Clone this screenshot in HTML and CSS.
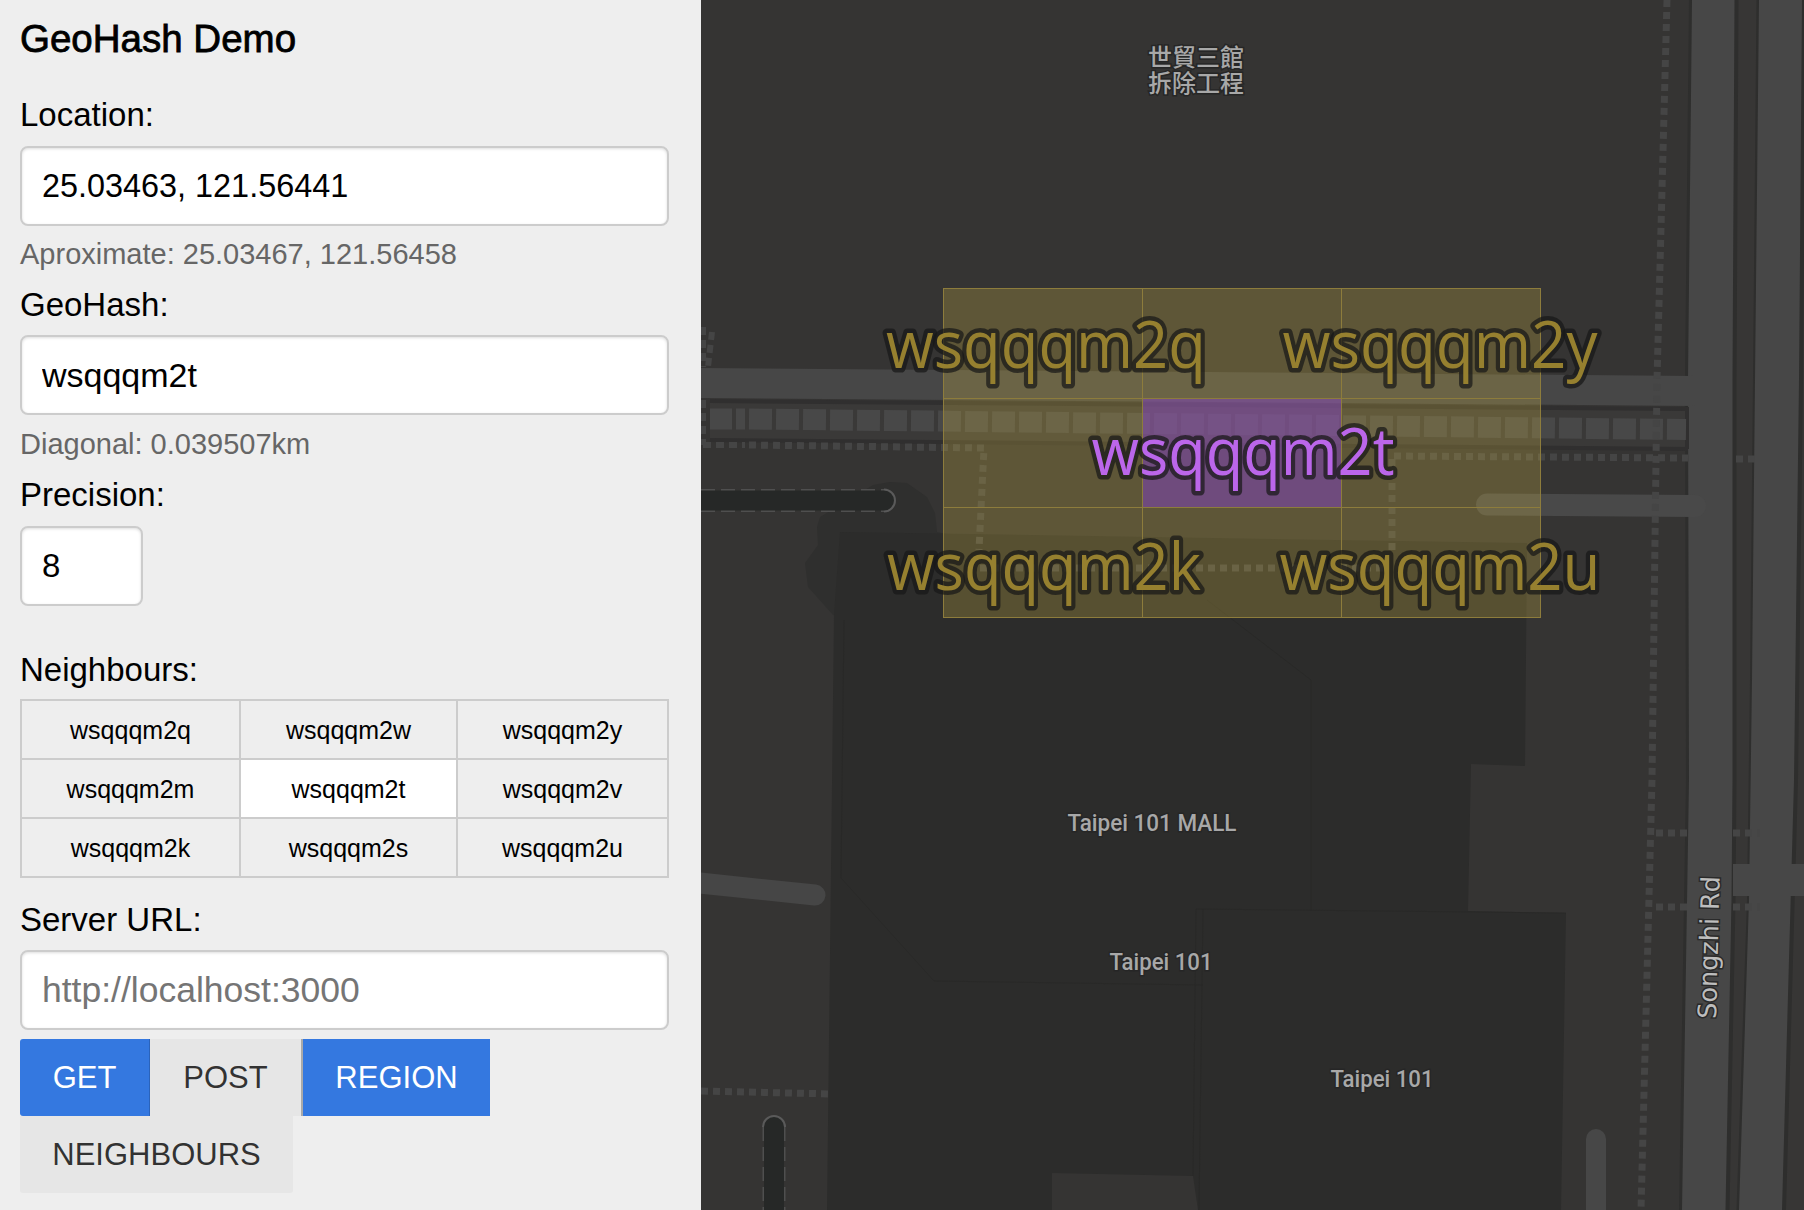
FILE: index.html
```html
<!DOCTYPE html>
<html lang="en">
<head>
<meta charset="utf-8">
<title>GeoHash Demo</title>
<link rel="stylesheet" href="styles.css">
</head>
<body>
<div class="app">
  <aside class="panel">
    <h1 class="title">GeoHash Demo</h1>
    <form class="form">
      <label class="label">Location:</label>
      <input class="input input-coords" type="text" value="25.03463, 121.56441">
      <p class="hint">Aproximate: 25.03467, 121.56458</p>
      <label class="label label-tight">GeoHash:</label>
      <input class="input input-hash" type="text" value="wsqqqm2t">
      <p class="hint hint-second">Diagonal: 0.039507km</p>
      <label class="label">Precision:</label>
      <input class="input input-small" type="text" value="8">
      <label class="label label-gap">Neighbours:</label>
      <table class="grid">
        <colgroup><col class="col-a"><col class="col-b"><col class="col-c"></colgroup>
        <tr><td>wsqqqm2q</td><td>wsqqqm2w</td><td>wsqqqm2y</td></tr>
        <tr><td>wsqqqm2m</td><td class="current">wsqqqm2t</td><td>wsqqqm2v</td></tr>
        <tr><td>wsqqqm2k</td><td>wsqqqm2s</td><td>wsqqqm2u</td></tr>
      </table>
      <label class="label label-server">Server URL:</label>
      <input class="input input-url" type="text" placeholder="http://localhost:3000">
      <div class="buttons">
        <button type="button" class="btn btn-primary btn-get">GET</button>
        <button type="button" class="btn btn-post">POST</button>
        <button type="button" class="btn btn-primary btn-region">REGION</button>
        <button type="button" class="btn btn-neighbours">NEIGHBOURS</button>
      </div>
    </form>
  </aside>
  <main class="map">
    <svg class="map-svg" viewBox="701 0 1103 1210" width="1103" height="1210" xmlns="http://www.w3.org/2000/svg">
      <rect class="ground" x="701" y="0" width="1103" height="1210"/>

      <!-- buildings -->
      <path class="bld-soft" d="M873 485 L890 482 L907 483 L927 497 L935 513 L937 532 L947 534 L947 625 L845 618 L833 615 L808 587 L805 563 L818 545 L817 527 L820 517 Z"/>
      <path class="bld" d="M840 532 L1527 543 L1525 766 L1471 764 L1468 911 L1566 913 L1561 1210 L827 1210 L834 615 Z"/>
      <path class="ground-patch" d="M1052 1173 L1193 1176 L1198 1210 L1052 1210 Z"/>
      <path class="bld-line" d="M844 620 L841 878 L934 981 L1203 985 M1207 600 L1311 680 L1311 911 M1196 909 L1566 913 M1196 909 L1193 1176 M1203 909 L1199 1210"/>

      <!-- right roads -->
      <path class="median" d="M1734 0 L1804 0 L1804 1210 L1725 1210 Z"/>
      <path class="road-edge" d="M1691 0 L1687 380 L1688 780 L1681 1210"/>
      <path class="road" d="M1692 0 L1736 0 L1734 380 L1734 780 L1727 1210 L1682 1210 L1689 780 L1688 380 Z"/>
      <path class="road-edge" d="M1736.5 0 L1734.5 380 L1734.5 780 L1733.5 900 L1727.5 1210 M1758.5 0 L1755 380 L1752 680 L1749 900 L1738.5 1210"/>
      <path class="road" d="M1759 0 L1803 0 L1800 380 L1795 780 L1783 1210 L1739 1210 L1749 900 L1752 680 L1755 380 Z"/>
      <path class="road-edge" d="M1804 0 L1801 380 L1796 780 L1784 1210"/>
      <path class="road" d="M1733 864 L1804 864 L1804 896 L1733 896 Z"/>

      <!-- upper road and crossing -->
      <path class="band" d="M710 399 L1688 407 L1688 449 L710 440 Z"/>
      <path class="band-edge" d="M710 401 L1688 409 M710 440 L1688 449 M1687 407 L1687 449"/>
      <path class="road" d="M701 368 L1695 376 L1695 406 L701 398 Z"/>
      <path class="crossing" d="M749 419 L1686 429.5"/>
      <path class="crossing-stub" d="M710 419 L732 419 M736 419 L745 419"/>

      <path class="side-road" d="M1487 504.5 L1695 506"/>
      <path class="side-road-sm" d="M690 882 L815 895"/>
      <path class="side-road-v" d="M1596 1139 L1596 1220"/>

      <!-- footpaths -->
      <path class="path" d="M749 445 L984 448 L979 550"/>
      <path class="path" d="M980 568 L1385 568"/>
      <path class="path" d="M1392 550 L1392 456 L1688 458"/>
      <path class="path" d="M1667 0 L1657 380 L1652 780 L1641 1210"/>
      <path class="path" d="M701 1091 L833 1094"/>
      <path class="path" d="M1656 833 L1688 833 M1733 833 L1760 833 M1656 907 L1688 907 M1733 907 L1760 907 M1736 459 L1758 459"/>
      <path class="path-hatch" d="M703 327 L703 367 M712 332 L708 367 M703 400 L703 445 M703 445 L745 445"/>

      <!-- tunnels -->
      <path class="tunnel-line" d="M701 500.5 L884 500.5"/>
      <path class="tunnel" d="M701 500.5 L884 500.5"/>
      <path class="tunnel-end" d="M884 489.5 A11 11 0 0 1 884 511.5"/>
      <path class="tunnel-line" d="M774 1127 L774 1220"/>
      <path class="tunnel" d="M774 1127 L774 1220"/>
      <path class="tunnel-end" d="M763 1127 A11 11 0 0 1 785 1127"/>

      <!-- place labels -->
      <text class="place place-cjk" x="1196"><tspan x="1196" y="66">世貿三館</tspan><tspan x="1196" y="92">拆除工程</tspan></text>
      <text class="place" x="1152" y="831" textLength="169" lengthAdjust="spacingAndGlyphs">Taipei 101 MALL</text>
      <text class="place" x="1161" y="970" textLength="103" lengthAdjust="spacingAndGlyphs">Taipei 101</text>
      <text class="place" x="1382" y="1087" textLength="103" lengthAdjust="spacingAndGlyphs">Taipei 101</text>
      <text class="road-name" transform="translate(1716 1019) rotate(-88.5)">Songzhi Rd</text>

      <!-- geohash cells -->
      <rect class="cell" x="943.5" y="288.5" width="597" height="329"/>
      <rect class="cell-center" x="1142.5" y="398.5" width="199" height="109"/>
      <path class="cell-line" d="M1142.5 288.5 L1142.5 617.5 M1341.5 288.5 L1341.5 617.5 M943.5 398.5 L1540.5 398.5 M943.5 507.5 L1540.5 507.5"/>
      <rect class="cell-border" x="943.5" y="288.5" width="597" height="329"/>

      <text class="hash" x="1046" y="368" textLength="320" lengthAdjust="spacingAndGlyphs">wsqqqm2q</text>
      <text class="hash" x="1440" y="368" textLength="315" lengthAdjust="spacingAndGlyphs">wsqqqm2y</text>
      <text class="hash hash-center" x="1243" y="475" textLength="303" lengthAdjust="spacingAndGlyphs">wsqqqm2t</text>
      <text class="hash" x="1044" y="590" textLength="314" lengthAdjust="spacingAndGlyphs">wsqqqm2k</text>
      <text class="hash" x="1440" y="590" textLength="321" lengthAdjust="spacingAndGlyphs">wsqqqm2u</text>
    </svg>
  </main>
</div>
</body>
</html>
```
FILE: styles.css
```css
* { box-sizing: border-box; }
html, body { margin: 0; padding: 0; height: 100%; overflow: hidden; }
body { font-family: "Liberation Sans", Arial, sans-serif; color: #000; }

.app { display: flex; width: 1804px; height: 1210px; }

.panel { width: 701px; flex: none; background: #eee; padding: 18px 32px 0 20px; }
.title { margin: 0 0 35px; font-size: 38.5px; line-height: 42px; font-weight: 400; -webkit-text-stroke: .8px #000; }

.form { display: flex; flex-direction: column; align-items: flex-start; }
.label { display: block; font-size: 33px; line-height: 40px; margin-bottom: 11px; }
.label-tight { margin-bottom: 10px; }
.label-gap { margin-top: 44px; margin-bottom: 9px; }
.label-server { margin-top: 22px; margin-bottom: 10px; }

.input {
  width: 649px; height: 80px; padding: 0 20px;
  font: 33px "Liberation Sans", Arial, sans-serif; color: #000;
  background: #fff; border: 2px solid #ccc; border-radius: 8px;
  box-shadow: inset 0 1px 3px #ddd; outline: none;
}
.input-coords { font-size: 32.4px; }
.input-hash { font-size: 34px; }
.input-url { font-size: 35.5px; }
.input-small { width: 123px; }
.input::placeholder { color: #757575; opacity: 1; }

.hint { margin: 10px 0 13px; font-size: 29px; line-height: 36px; color: #666; }
.hint-second { margin-top: 11px; }

.grid { width: 647px; height: 177px; border-collapse: collapse; table-layout: fixed; border: 2px solid #ccc; }
.col-a { width: 219px; }
.col-b { width: 217px; }
.col-c { width: 211px; }
.grid td { border: 2px solid #ccc; padding: 0; height: 59px; text-align: center; font-size: 25px; line-height: 30px; }
.grid .current { background: #fff; }

.buttons { display: flex; flex-wrap: wrap; width: 649px; margin-top: 9px; }
.btn {
  height: 77px; padding: 0; border: 0; border-radius: 0;
  font: 31px "Liberation Sans", Arial, sans-serif;
  background: #e6e6e6; color: rgba(0, 0, 0, .8);
}
.btn-primary { background: #3478e0; color: #fff; }
.btn-get { width: 130px; border-radius: 3px 0 0 3px; border-right: 1px solid #2a63bb; }
.btn-post { width: 153px; border-right: 2px solid #a9a9a9; }
.btn-region { width: 187px; }
.btn-neighbours { width: 273px; border-radius: 0 0 3px 3px; }

.map { flex: 1; min-width: 0; }
.map-svg { display: block; }

.ground, .ground-patch { fill: #353433; }
.bld { fill: #2c2c2b; }
.bld-soft { fill: #2f2f2e; }
.bld-line { fill: none; stroke: #282827; stroke-width: 1; stroke-opacity: .7; }
.road { fill: #474747; }
.road-edge { fill: none; stroke: #2e2e2d; stroke-width: 4; }
.band { fill: #3a3938; }
.band-edge { fill: none; stroke: #302f2f; stroke-width: 4; }
.crossing { fill: none; stroke: #484848; stroke-width: 21; stroke-dasharray: 23 4; }
.crossing-stub { fill: none; stroke: #484848; stroke-width: 21; }
.median { fill: #373635; }
.side-road { fill: none; stroke: #494949; stroke-width: 22; stroke-linecap: round; }
.side-road-sm { fill: none; stroke: #464646; stroke-width: 21; stroke-linecap: round; }
.side-road-v { fill: none; stroke: #474747; stroke-width: 20; stroke-linecap: round; }
.path { fill: none; stroke: #454545; stroke-width: 7; stroke-dasharray: 7 5; }
.path-hatch { fill: none; stroke: #454545; stroke-width: 6; stroke-dasharray: 8 5; }
.tunnel-line { fill: none; stroke: #4f4f4f; stroke-width: 23; stroke-dasharray: 14 6; }
.tunnel { fill: none; stroke: #262827; stroke-width: 20; }
.tunnel-end { fill: #262827; stroke: #5a5a5a; stroke-width: 2; }

.place {
  font-family: Roboto, "Liberation Sans", sans-serif; font-size: 24px; font-weight: 500;
  fill: #a8a8a8; stroke: #262626; stroke-width: 3px; paint-order: stroke;
  text-anchor: middle;
}
.place-cjk { font-family: "Noto Sans CJK TC", sans-serif; font-size: 24px; }
.road-name {
  font-family: "DejaVu Sans", sans-serif; font-size: 25.5px;
  fill: #bdbdbd; stroke: #2a2a2a; stroke-width: 3px; paint-order: stroke;
}

.cell { fill: rgba(214, 186, 68, .26); }
.cell-center { fill: rgba(126, 67, 184, .55); }
.cell-line, .cell-border { fill: none; stroke: #8d7c3c; stroke-width: 1; }

.hash {
  font-family: "Open Sans", sans-serif; font-size: 66px; text-anchor: middle;
  fill: #96802f; stroke: rgba(24, 24, 24, .72); stroke-width: 9px; paint-order: stroke; stroke-linejoin: round;
}
.hash-center { fill: #bb66ea; }
```
